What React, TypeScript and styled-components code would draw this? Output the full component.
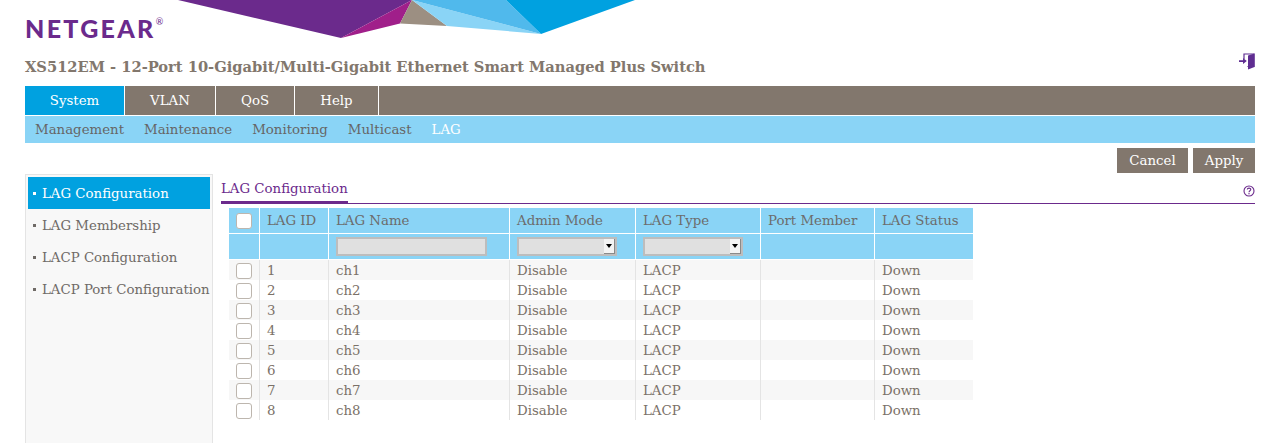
import styled, { createGlobalStyle } from 'styled-components';

const GlobalStyle = createGlobalStyle`
  html, body {
    margin: 0;
    padding: 0;
    background: #fff;
  }
  body {
    font-family: 'DejaVu Serif', serif;
    font-size: 13.33px;
    color: #786e64;
  }
`;

const Page = styled.div`
  height: 100vh;
  overflow: hidden;
  padding: 0 25px;
  box-sizing: border-box;
`;

const Banner = styled.div`
  display: flex;
  align-items: flex-start;
  height: 46px;
`;

const Logo = styled.div`
  display: flex;
  align-items: flex-start;
  width: 153px;
  margin-top: 13px;
  font-family: Lato, sans-serif;
  font-weight: 900;
  font-size: 25px;
  line-height: 30px;
  letter-spacing: 2.3px;
  color: #6b2a8c;

  sup {
    margin-top: 3px;
    font-size: 9px;
    line-height: 12px;
    letter-spacing: 0;
    font-weight: 400;
  }
`;

const TitleRow = styled.div`
  display: flex;
  justify-content: space-between;
  align-items: flex-start;
  height: 40px;
`;

const Title = styled.h1`
  margin: 12px 0 0;
  font-size: 14.67px;
  line-height: 18px;
  font-weight: 700;
  color: #82776d;
`;

const ExitIcon = styled.svg`
  display: block;
  width: 16px;
  height: 17px;
  margin-top: 7px;
`;

const MainNav = styled.nav`
  display: flex;
  height: 29px;
  background: #82776d;
`;

const MainTab = styled.a<{ $active?: boolean; $width: number }>`
  display: flex;
  align-items: center;
  justify-content: center;
  box-sizing: border-box;
  width: ${(p) => p.$width}px;
  border-right: 1px solid #fff;
  color: #fff;
  background: ${(p) => (p.$active ? '#00a1e0' : 'transparent')};
`;

const SubNav = styled.nav`
  display: flex;
  align-items: center;
  gap: 20px;
  height: 27px;
  margin-top: 1px;
  padding-left: 10px;
  background: #8ad4f6;
`;

const SubLink = styled.a<{ $active?: boolean }>`
  color: ${(p) => (p.$active ? '#fff' : '#666')};
`;

const Actions = styled.div`
  display: flex;
  justify-content: flex-end;
  gap: 5px;
  height: 26px;
  margin-top: 5px;
`;

const ActionButton = styled.button<{ $width: number }>`
  width: ${(p) => p.$width}px;
  height: 25px;
  padding: 0;
  border: 0;
  font: inherit;
  color: #fff;
  background: #82776d;
`;

const Workspace = styled.div`
  display: grid;
  grid-template-columns: 188px 1fr;
  column-gap: 8px;
`;

const Sidebar = styled.aside`
  box-sizing: border-box;
  height: 300px;
  padding: 2px;
  border: 1px solid #e4e4e4;
  background: #f8f8f8;
`;

const SideItem = styled.a<{ $active?: boolean }>`
  display: flex;
  align-items: center;
  gap: 6px;
  height: 32px;
  padding-left: 5px;
  white-space: nowrap;
  color: ${(p) => (p.$active ? '#fff' : '#6f6a66')};
  background: ${(p) => (p.$active ? '#00a1e0' : 'transparent')};

  &::before {
    content: '';
    width: 3px;
    height: 3px;
    background: currentColor;
  }
`;

const TabBar = styled.div`
  display: flex;
  justify-content: space-between;
  height: 29px;
  border-bottom: 1px solid #6b2a8c;
`;

const PanelTab = styled.div`
  box-sizing: border-box;
  height: 30px;
  width: 127px;
  padding-top: 7px;
  line-height: 16px;
  color: #6b2a8c;
  border-bottom: 3px solid #6b2a8c;
`;

const HelpIcon = styled.svg`
  display: block;
  width: 12px;
  height: 12px;
  margin-top: 11px;
`;

const PortTable = styled.table`
  table-layout: fixed;
  width: 744px;
  margin: 4px 0 0 8px;
  border-spacing: 0;
  border-collapse: separate;
`;

const Column = styled.col<{ $width: number }>`
  width: ${(p) => p.$width}px;
`;

const HeadCell = styled.th`
  box-sizing: border-box;
  height: 26px;
  padding: 0 7px;
  font-weight: 400;
  text-align: left;
  color: #6c6c6c;
  background: #8ad4f6;
  border-right: 1px solid #fff;
  border-bottom: 1px solid #fff;

  &:last-child {
    border-right: 0;
  }
`;

const Row = styled.tr`
  &:nth-child(odd) td {
    background: #f7f7f7;
  }
`;

const Cell = styled.td`
  box-sizing: border-box;
  height: 20px;
  padding: 1px 7px 0;
  line-height: 19px;
  color: #7b7168;
  border-right: 1px solid #e4e4e4;

  &:last-child {
    border-right: 0;
  }
`;

const Check = styled.span`
  display: block;
  box-sizing: border-box;
  width: 16px;
  height: 16px;
  background: #fff;
  border: 1px solid #bdb6ae;
  border-radius: 3px;
`;

const TextField = styled.input`
  display: block;
  box-sizing: border-box;
  width: 151px;
  height: 19px;
  padding: 0;
  background: #e0e0e0;
  border: 2px solid #bdbdbd;
`;

const SelectField = styled.div`
  display: flex;
  justify-content: flex-end;
  box-sizing: border-box;
  width: 100px;
  height: 19px;
  background: #e0e0e0;
  border: 2px solid #bdbdbd;
`;

const SelectArrow = styled.span`
  display: flex;
  align-items: center;
  justify-content: center;
  box-sizing: border-box;
  width: 11px;
  background: #f4f4f4;
  border-right: 1px solid #8a8a8a;
  border-bottom: 1px solid #8a8a8a;

  &::after {
    content: '';
    border-left: 3px solid transparent;
    border-right: 3px solid transparent;
    border-top: 4px solid #000;
  }
`;

const columns = [
  { label: '', width: 31 },
  { label: 'LAG ID', width: 69 },
  { label: 'LAG Name', width: 181 },
  { label: 'Admin Mode', width: 126 },
  { label: 'LAG Type', width: 125 },
  { label: 'Port Member', width: 114 },
  { label: 'LAG Status', width: 98 },
];

const mainTabs = [
  { label: 'System', width: 100, active: true },
  { label: 'VLAN', width: 91 },
  { label: 'QoS', width: 79 },
  { label: 'Help', width: 84 },
];

const subLinks = ['Management', 'Maintenance', 'Monitoring', 'Multicast', 'LAG'];
const sideItems = ['LAG Configuration', 'LAG Membership', 'LACP Configuration', 'LACP Port Configuration'];
const lags = [1, 2, 3, 4, 5, 6, 7, 8];

export default function App() {
  return (
    <Page>
      <GlobalStyle />
      <Banner>
        <Logo>
          NETGEAR<sup>®</sup>
        </Logo>
        <svg width="460" height="39" viewBox="178 0 460 39" aria-hidden="true">
          <polygon points="178,0 412,0 341,38" fill="#6b2a8c" />
          <polygon points="341,38 412,0 400,23.5" fill="#a01f8a" />
          <polygon points="412,0 400,23.5 447,26" fill="#9c8f82" />
          <polygon points="412,0 447,26 541,34" fill="#8ad4f6" />
          <polygon points="412,0 506,0 541,34" fill="#50b9ec" />
          <polygon points="506,0 635,0 541,34" fill="#00a1e0" />
        </svg>
      </Banner>
      <TitleRow>
        <Title>XS512EM - 12-Port 10-Gigabit/Multi-Gigabit Ethernet Smart Managed Plus Switch</Title>
        <ExitIcon viewBox="0 0 16 17" aria-hidden="true">
          <path d="M5 6V1H15V13.5H8.5" fill="none" stroke="#5f2d91" strokeWidth="1.2" />
          <polygon points="9,2.5 15.5,0.5 15.5,14 9,16.5" fill="#5f2d91" />
          <polygon points="0,7.2 4,7.2 4,5 7.8,8 4,11 4,9 0,9" fill="#5f2d91" />
        </ExitIcon>
      </TitleRow>
      <MainNav>
        {mainTabs.map((tab) => (
          <MainTab key={tab.label} $active={tab.active} $width={tab.width}>
            {tab.label}
          </MainTab>
        ))}
      </MainNav>
      <SubNav>
        {subLinks.map((link) => (
          <SubLink key={link} $active={link === 'LAG'}>
            {link}
          </SubLink>
        ))}
      </SubNav>
      <Actions>
        <ActionButton $width={71}>Cancel</ActionButton>
        <ActionButton $width={62}>Apply</ActionButton>
      </Actions>
      <Workspace>
        <Sidebar>
          {sideItems.map((item, i) => (
            <SideItem key={item} $active={i === 0}>
              {item}
            </SideItem>
          ))}
        </Sidebar>
        <div>
          <TabBar>
            <PanelTab>LAG Configuration</PanelTab>
            <HelpIcon viewBox="0 0 12 12" aria-hidden="true">
              <circle cx="6" cy="6" r="5" fill="none" stroke="#6b2a8c" strokeWidth="1.1" />
              <path d="M4.3 4.6C4.3 2.6 7.8 2.6 7.8 4.5C7.8 5.8 6 5.7 6 7.2" fill="none" stroke="#6b2a8c" strokeWidth="1.1" />
              <rect x="5.4" y="8.1" width="1.2" height="1.2" fill="#6b2a8c" />
            </HelpIcon>
          </TabBar>
          <PortTable>
            <colgroup>
              {columns.map((col) => (
                <Column key={col.label} $width={col.width} />
              ))}
            </colgroup>
            <thead>
              <tr>
                {columns.map((col) => (
                  <HeadCell key={col.label}>{col.label || <Check />}</HeadCell>
                ))}
              </tr>
              <tr>
                <HeadCell />
                <HeadCell />
                <HeadCell>
                  <TextField />
                </HeadCell>
                <HeadCell>
                  <SelectField>
                    <SelectArrow />
                  </SelectField>
                </HeadCell>
                <HeadCell>
                  <SelectField>
                    <SelectArrow />
                  </SelectField>
                </HeadCell>
                <HeadCell />
                <HeadCell />
              </tr>
            </thead>
            <tbody>
              {lags.map((id) => (
                <Row key={id}>
                  <Cell>
                    <Check />
                  </Cell>
                  <Cell>{id}</Cell>
                  <Cell>ch{id}</Cell>
                  <Cell>Disable</Cell>
                  <Cell>LACP</Cell>
                  <Cell />
                  <Cell>Down</Cell>
                </Row>
              ))}
            </tbody>
          </PortTable>
        </div>
      </Workspace>
    </Page>
  );
}
